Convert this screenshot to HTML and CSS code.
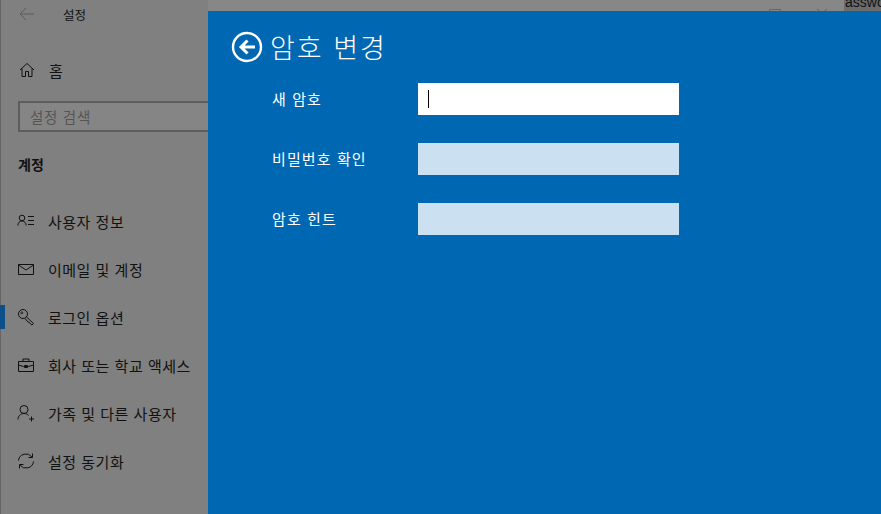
FILE: index.html
```html
<!DOCTYPE html>
<html lang="ko">
<head>
<meta charset="utf-8">
<title>설정</title>
<link rel="stylesheet" href="styles.css">
</head>
<body>
<div class="stage">
  <div class="window">
    <aside class="sidebar">
      <div class="titlebar">
        <svg class="back-arrow" width="16" height="14" viewBox="0 0 16 14"><path d="M7 1 1 7l6 6M1 7h14" fill="none" stroke="#5c5c5c" stroke-width="1"/></svg>
        <span class="app-title">설정</span>
      </div>
      <div class="home">
        <svg class="icon" width="16" height="16" viewBox="0 0 16 16"><path d="M1 8 8 1.500 15 8M3 6.500V14.500H6.500V9.500H9.500V14.500H13V6.500" fill="none" stroke="#111" stroke-width="1"/></svg>
        <span>홈</span>
      </div>
      <div class="search"><span>설정 검색</span></div>
      <h2 class="section">계정</h2>
      <nav class="nav">
        <div class="nav-item">
          <svg class="icon" width="18" height="16" viewBox="0 0 18 16"><circle cx="5" cy="5" r="2.800" fill="none" stroke="#111"/><path d="M.8 12.500C1 9.500 3 8 5 8s4 1.500 4.200 4.500M11 3.500h6M11 7.500h6M11 11.500h6" fill="none" stroke="#111"/></svg>
          <span>사용자 정보</span>
        </div>
        <div class="nav-item">
          <svg class="icon" width="18" height="16" viewBox="0 0 18 16"><path d="M1.500 3.500h15v10h-15zM1.500 4l7.500 5 7.500-5" fill="none" stroke="#111"/></svg>
          <span>이메일 및 계정</span>
        </div>
        <div class="nav-item active">
          <svg class="icon" width="18" height="18" viewBox="0 0 18 18"><circle cx="6" cy="6" r="4.500" fill="none" stroke="#111"/><circle cx="4.800" cy="4.800" r="1" fill="none" stroke="#111" stroke-width=".8"/><path d="m9.500 9 7 6.500-1.500 1.500-1.500-1-1-1.500-1.500-.5-3-3.500" fill="none" stroke="#111"/></svg>
          <span>로그인 옵션</span>
        </div>
        <div class="nav-item">
          <svg class="icon" width="18" height="16" viewBox="0 0 18 16"><path d="M1.500 4.500h15v10h-15zM6 4.500V2h6v2.500M1.500 8l5 1.500h5l5-1.500M7.500 8.500h3v2h-3z" fill="none" stroke="#111"/></svg>
          <span>회사 또는 학교 액세스</span>
        </div>
        <div class="nav-item">
          <svg class="icon" width="18" height="18" viewBox="0 0 18 18"><circle cx="7" cy="5.500" r="4" fill="none" stroke="#111"/><path d="M1 15.500c0-3.500 2.500-6 6-6 2 0 3.500.8 4.500 2M12 15h5M14.500 12.500v5" fill="none" stroke="#111"/></svg>
          <span>가족 및 다른 사용자</span>
        </div>
        <div class="nav-item">
          <svg class="icon" width="18" height="18" viewBox="0 0 18 18"><path d="M1.500 8.500A7.500 7.500 0 0 1 15 5M15.500 1.500V5.500H11.500M16.500 9.500A7.500 7.500 0 0 1 3 13M2.500 16.500V12.500H6.500" fill="none" stroke="#111"/></svg>
          <span>설정 동기화</span>
        </div>
      </nav>
    </aside>
    <div class="main">
      <div class="controls">
        <svg width="12" height="12" viewBox="0 0 12 12"><path d="M.5 12V9.500h11V12" fill="none" stroke="#666"/></svg>
        <svg width="14" height="12" viewBox="0 0 14 12"><path d="m2 9 4 3M12 9l-4 3" fill="none" stroke="#666"/></svg>
      </div>
      <div class="corner"><span>asswo</span></div>
    </div>
  </div>
  <section class="panel">
    <header class="panel-head">
      <svg class="panel-back" width="32" height="32" viewBox="0 0 32 32"><circle cx="16" cy="16" r="14" fill="none" stroke="#fff" stroke-width="2.400"/><path d="M16.500 9.500 10 16l6.500 6.500M10.500 16H24" fill="none" stroke="#fff" stroke-width="3"/></svg>
      <h1>암호 변경</h1>
    </header>
    <form class="form">
      <label class="row"><span class="label">새 암호</span><span class="field focused"><i class="caret"></i></span></label>
      <label class="row"><span class="label">비밀번호 확인</span><span class="field"></span></label>
      <label class="row"><span class="label">암호 힌트</span><span class="field"></span></label>
    </form>
  </section>
</div>
</body>
</html>
```
FILE: styles.css
```css
* { box-sizing: border-box; }
html, body { margin: 0; height: 100%; overflow: hidden; }
body { font-family: "Noto Sans CJK KR", "Liberation Sans", sans-serif; }
.stage { position: relative; width: 881px; height: 514px; background: #808080; overflow: hidden; }
.window { display: flex; height: 100%; border-left: 1px solid #666; }
.sidebar { width: 207px; flex: none; color: #111; }
.titlebar { display: flex; align-items: center; height: 28px; padding-left: 18px; font-size: 12.500px; }
.app-title { margin-left: 28px; }
.home { display: flex; align-items: center; gap: 14px; height: 28px; margin-top: 28px; padding-left: 18px; font-size: 15px; }
.search { height: 31px; margin: 17px 0 0 17px; border: 2px solid #5e5e5e; border-right: 0; background: #858585; padding: 1px 0 0 10px; font-size: 14.500px; line-height: 26px; color: #555; letter-spacing: .7px; }
.section { margin: 21px 0 0 17px; font-size: 14px; line-height: 22px; font-weight: 700; }
.nav { display: flex; flex-direction: column; margin-top: 22px; }
.nav-item { position: relative; display: flex; align-items: center; height: 48px; padding-left: 16px; font-size: 15px; letter-spacing: .5px; }
.nav-item .icon { margin-right: 13px; }
.nav-item.active::before { content: ""; position: absolute; left: -1px; top: 12px; width: 5px; height: 24px; background: #0d5089; }
.main { flex: 1; position: relative; background: #878787; }
.controls { display: flex; gap: 34px; position: absolute; left: 561px; top: 0; }
.corner { position: absolute; right: 0; top: 0; width: 37px; height: 11px; background: #6c6c6c; overflow: hidden; font-size: 14px; line-height: 5px; padding-left: 1px; font-family: "Liberation Sans", sans-serif; color: #111; white-space: nowrap; }
.panel { position: absolute; left: 208px; top: 11px; right: 0; bottom: 0; background: #0067b3; color: #fff; padding: 20px 0 0 23px; }
.panel-head { display: flex; align-items: center; gap: 7px; height: 32px; }
.panel-head h1 { margin: 0; font-size: 27px; font-weight: 300; line-height: 32px; letter-spacing: 2px; }
.form { display: flex; flex-direction: column; gap: 28px; margin-top: 20px; padding-left: 41px; }
.row { display: flex; align-items: center; }
.label { width: 146px; margin-top: -2px; font-size: 15px; letter-spacing: 1.100px; }
.field { display: flex; align-items: center; width: 261px; height: 32px; background: #cbe0f0; padding-left: 10px; }
.field.focused { background: #fff; }
.caret { width: 1px; height: 18px; background: #000; }
```
